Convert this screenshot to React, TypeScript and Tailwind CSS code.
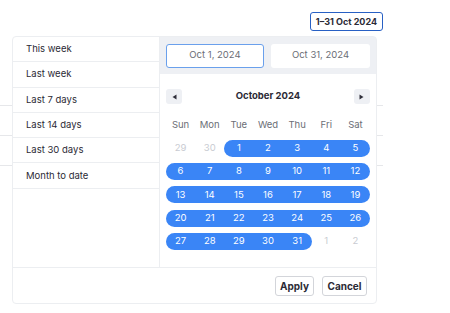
import React from 'react';

type Day = { n: number; muted?: boolean; inRange?: boolean; start?: boolean; end?: boolean };

const presets = ['This week', 'Last week', 'Last 7 days', 'Last 14 days', 'Last 30 days', 'Month to date'];
const weekdays = ['Sun', 'Mon', 'Tue', 'Wed', 'Thu', 'Fri', 'Sat'];

function buildWeeks(): Day[][] {
  const days: Day[] = [{ n: 29, muted: true }, { n: 30, muted: true }];
  for (let i = 1; i <= 31; i++) days.push({ n: i, inRange: true });
  days.push({ n: 1, muted: true }, { n: 2, muted: true });
  const weeks: Day[][] = [];
  for (let i = 0; i < days.length; i += 7) weeks.push(days.slice(i, i + 7));
  weeks.forEach((week) => {
    week.forEach((d, i) => {
      if (!d.inRange) return;
      if (i === 0 || !week[i - 1].inRange) d.start = true;
      if (i === 6 || !week[i + 1].inRange) d.end = true;
    });
  });
  return weeks;
}

function Triangle({ dir }: { dir: 'left' | 'right' }) {
  return (
    <svg width="5" height="6" viewBox="0 0 5 6">
      {dir === 'left' ? <path d="M4.5 0.5 L0.5 3 L4.5 5.5 Z" fill="#2f2f3a" /> : <path d="M0.5 0.5 L4.5 3 L0.5 5.5 Z" fill="#2f2f3a" />}
    </svg>
  );
}

export default function App() {
  const weeks = buildWeeks();

  return (
    <div className="relative w-[450px] h-[313px] bg-white overflow-hidden text-[#2b2a35]" style={{ fontFamily: 'Inter, "Noto Sans", sans-serif' }}>
      <div className="flex justify-end w-[383px] pt-[12px]">
        <button className="h-[19px] px-[5px] border-[1.5px] border-[#2860c4] rounded-[3px] text-[9px] font-bold leading-none text-[#2b2a35]">
          1–31 Oct 2024
        </button>
      </div>

      {/* table rows behind the popover */}
      <div className="w-[383px] mt-[74px]">
        <div className="h-[30px] border-t border-[#e6e7ea]" />
        <div className="h-[30px] border-t border-[#e6e7ea]" />
        <div className="h-[30px] border-t border-[#e6e7ea]" />
      </div>

      <div className="absolute left-[12px] top-[36px] w-[365px] h-[268px] bg-white border border-[#eceef1] rounded-[4px] flex flex-col">
        <div className="flex h-[230px]">
          <div className="w-[147px] border-r border-[#eceef1]">
            {presets.map((p) => (
              <div key={p} className="h-[25.3px] border-b border-[#eceef1] flex items-center pl-[13px] text-[9.5px]">
                {p}
              </div>
            ))}
          </div>

          <div className="flex-1 flex flex-col">
            <div className="h-[37px] bg-[#eef0f4] flex items-center gap-[7px] pl-[6px] pr-[6px]">
              <div className="w-[98px] h-[24px] bg-white border border-[#6aa0ec] rounded-[3px] flex items-center justify-center text-[9.5px] text-[#6b6e76]">
                Oct 1, 2024
              </div>
              <div className="w-[99px] h-[24px] bg-white rounded-[3px] flex items-center justify-center text-[9.5px] text-[#6b6e76]">
                Oct 31, 2024
              </div>
            </div>

            <div className="px-[6px] pt-[15px]">
              <div className="flex items-center justify-between h-[15px]">
                <div className="w-[16px] h-[15px] bg-[#eef0f4] rounded-[3px] flex items-center justify-center">
                  <Triangle dir="left" />
                </div>
                <div className="text-[9.5px] font-bold">October 2024</div>
                <div className="w-[16px] h-[15px] bg-[#eef0f4] rounded-[3px] flex items-center justify-center">
                  <Triangle dir="right" />
                </div>
              </div>

              <div className="grid grid-cols-7 h-[23px] mt-[9.5px] items-center text-[9.5px] text-[#6b6e76]">
                {weekdays.map((w) => (
                  <div key={w} className="text-center">{w}</div>
                ))}
              </div>

              {weeks.map((week, wi) => (
                <div key={wi} className="grid grid-cols-7 h-[23.3px] items-center text-[9.5px]">
                  {week.map((d, di) => (
                    <div
                      key={di}
                      className={
                        'h-[17px] flex items-center justify-center ' +
                        (d.inRange ? 'bg-[#3a85f6] text-white ' : 'text-[#c9ccd2] ') +
                        (d.start ? 'rounded-l-full ' : '') +
                        (d.end ? 'rounded-r-full' : '')
                      }
                    >
                      {d.n}
                    </div>
                  ))}
                </div>
              ))}
            </div>
          </div>
        </div>

        <div className="flex-1 border-t border-[#eceef1] flex items-center justify-end gap-[8px] pr-[9px]">
          <button className="h-[20px] w-[39px] border border-[#d3d5da] rounded-[3px] text-[10px] font-bold leading-none">Apply</button>
          <button className="h-[20px] w-[45px] border border-[#d3d5da] rounded-[3px] text-[10px] font-bold leading-none">Cancel</button>
        </div>
      </div>
    </div>
  );
}
